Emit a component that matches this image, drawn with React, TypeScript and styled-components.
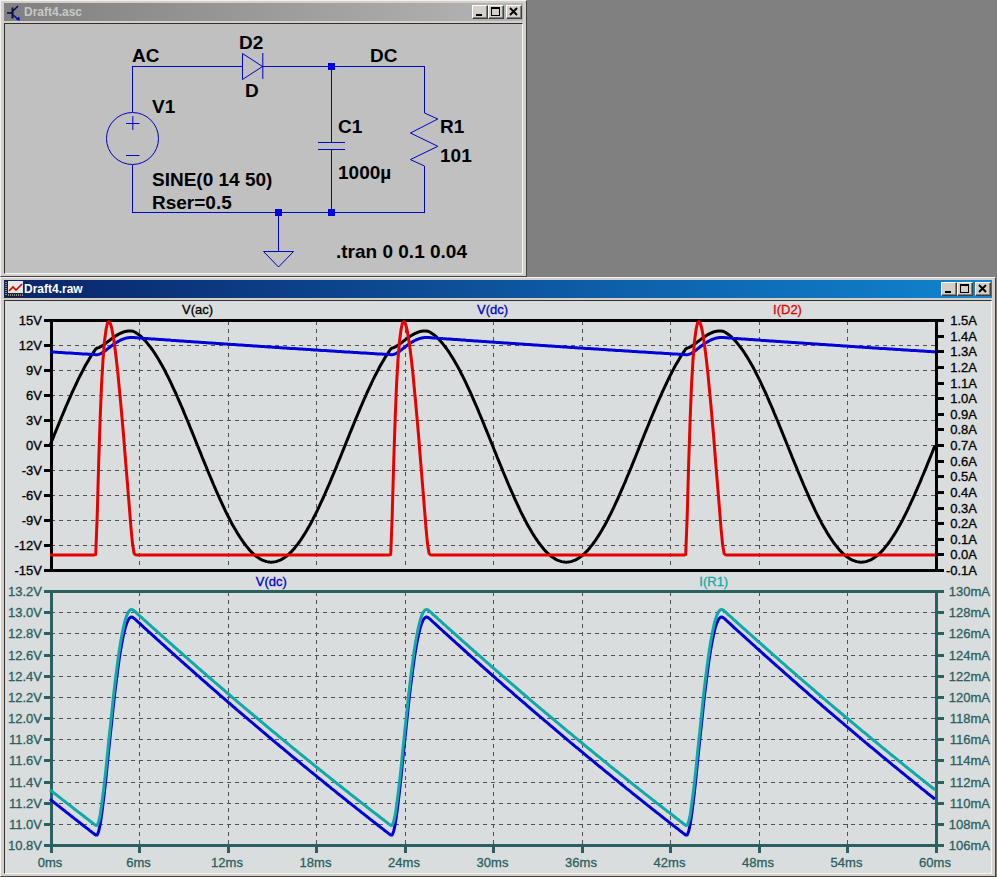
import React from 'react';
import styled, { createGlobalStyle } from 'styled-components';

const GlobalStyle = createGlobalStyle`
  html, body {
    margin: 0;
    padding: 0;
    background: #808080;
  }
  body {
    width: 997px;
    height: 877px;
    overflow: hidden;
    font-family: "Liberation Sans", Arial, sans-serif;
  }
`;

const Desktop = styled.div`
  width: 997px;
  height: 877px;
  display: flex;
  flex-direction: column;
  background: #808080;
`;

const Window = styled.div<{ $w: number; $h: number }>`
  box-sizing: border-box;
  flex: none;
  width: ${({ $w }) => $w}px;
  height: ${({ $h }) => $h}px;
  display: flex;
  flex-direction: column;
  background: #d4d0c8;
  padding: 2px 3px;
  border-top: 1px solid #f2f2f2;
  border-left: 1px solid #f2f2f2;
  border-right: 1px solid #404040;
  border-bottom: 1px solid #404040;
`;

const TitleBar = styled.div<{ $active?: boolean }>`
  flex: none;
  height: 18px;
  display: flex;
  align-items: center;
  gap: 1px;
  padding: 0 1px;
  background: ${({ $active }) =>
    $active
      ? 'linear-gradient(90deg, #0a246a, #1084d0)'
      : 'linear-gradient(90deg, #808080, #b5b5b5)'};
  color: ${({ $active }) => ($active ? '#ffffff' : '#c8c8c8')};
  font-size: 12px;
  font-weight: bold;
`;

const TitleText = styled.span`
  flex: 1;
`;

const Buttons = styled.div`
  display: flex;
  align-items: center;
`;

const CaptionButton = styled.div<{ $gap?: boolean }>`
  box-sizing: border-box;
  width: 16px;
  height: 14px;
  margin-left: ${({ $gap }) => ($gap ? 2 : 0)}px;
  display: flex;
  align-items: center;
  justify-content: center;
  background: #d4d0c8;
  border-top: 1px solid #ffffff;
  border-left: 1px solid #ffffff;
  border-right: 1px solid #404040;
  border-bottom: 1px solid #404040;
  box-shadow: inset -1px -1px 0 #808080;
`;

const Client = styled.div<{ $bg: string }>`
  flex: 1;
  min-height: 0;
  margin-top: 2px;
  background: ${({ $bg }) => $bg};
  border-top: 1px solid #303030;
  border-left: 1px solid #303030;
  border-right: 1px solid #f4f4f4;
  border-bottom: 1px solid #f4f4f4;
  overflow: hidden;
`;

const Pane = styled.section`
  display: flex;
  flex-direction: column;
`;

const TraceRow = styled.div<{ $count: number }>`
  height: 17px;
  width: 885px;
  margin-left: 45px;
  display: grid;
  grid-template-columns: repeat(${({ $count }) => $count}, 1fr);
`;

const Trace = styled.span<{ $color: string }>`
  text-align: center;
  color: ${({ $color }) => $color};
  font-size: 13px;
  line-height: 18px;
  -webkit-text-stroke: 0.3px ${({ $color }) => $color};
`;

const ChartSvg = styled.svg`
  display: block;
  flex: none;
  overflow: visible;
`;

const SchematicSvg = styled.svg`
  display: block;
`;

const TickLabel = styled.text`
  font-family: "Liberation Sans", Arial, sans-serif;
  font-size: 13px;
  stroke-width: 0.3px;
`;

const PartLabel = styled.text`
  font-family: "Liberation Sans", Arial, sans-serif;
  font-size: 19px;
  font-weight: bold;
  fill: #000000;
`;

const WIRE = '#0000c0';

// transient of the rectifier: source + Rser + diode into C || R, implicit euler
type Sample = { t: number; ac: number; dc: number; id: number };

function simulate(): Sample[] {
  const Is = 1e-14;
  const Vt = 0.02585;
  const Rser = 0.5;
  const C = 1000e-6;
  const R = 101;
  const dt = 2e-5;
  const diode = (v: number) => Is * (Math.exp(Math.min(v, 1.2) / Vt) - 1);
  let vc = 11.25;
  const out: Sample[] = [];
  const steps = Math.round(0.12 / dt);
  for (let n = 0; n <= steps; n++) {
    const t = n * dt;
    const vs = 14 * Math.sin(2 * Math.PI * 50 * t);
    // bisection on the diode current
    let lo = 0;
    let hi = 5;
    for (let k = 0; k < 50; k++) {
      const i = (lo + hi) / 2;
      const vcNext = (vc + (i * dt) / C) / (1 + dt / (R * C));
      const f = diode(vs - Rser * i - vcNext) - i;
      if (f > 0) lo = i;
      else hi = i;
    }
    const id = (lo + hi) / 2;
    vc = (vc + (id * dt) / C) / (1 + dt / (R * C));
    if (t >= 0.06 - dt / 2) {
      out.push({ t: (t - 0.06) * 1000, ac: vs - Rser * id, dc: vc, id });
    }
  }
  return out;
}

const samples = simulate();

const X0 = 46;
const X1 = 931;
const mapX = (ms: number) => X0 + (ms / 60) * (X1 - X0);
const msTicks = [0, 6, 12, 18, 24, 30, 36, 42, 48, 54, 60];

type Axis = { top: number; bottom: number; min: number; max: number; labels: string[] };

function linePoints(axis: Axis, pick: (s: Sample) => number) {
  const scale = (axis.bottom - axis.top) / (axis.max - axis.min);
  return samples
    .filter((_, i) => i % 5 === 0)
    .map((s) => `${(mapX(s.t) - 1).toFixed(1)},${(axis.bottom - (pick(s) - axis.min) * scale).toFixed(1)}`)
    .join(' ');
}

type Curve = { color: string; pick: (s: Sample) => number; axis: Axis };

type PlotProps = {
  height: number;
  color: string;
  labelEnd: number;
  left: Axis;
  right: Axis;
  curves: Curve[];
  xLabels?: boolean;
};

const Plot: React.FC<PlotProps> = ({ height, color, labelEnd, left, right, curves, xLabels }) => {
  const { top, bottom } = left;
  const rowY = (i: number, total: number) => top + (i * (bottom - top)) / (total - 1);
  return (
    <ChartSvg width={987} height={height}>
      {left.labels.map((_, i) =>
        i > 0 && i < left.labels.length - 1 ? (
          <line
            key={i}
            x1={X0}
            x2={X1}
            y1={rowY(i, left.labels.length)}
            y2={rowY(i, left.labels.length)}
            stroke="#505050"
            strokeDasharray="4 4"
            shapeRendering="crispEdges"
          />
        ) : null,
      )}
      {msTicks.slice(1, -1).map((ms) => (
        <line
          key={ms}
          x1={mapX(ms)}
          x2={mapX(ms)}
          y1={top}
          y2={bottom}
          stroke="#505050"
          strokeDasharray="4 4"
          shapeRendering="crispEdges"
        />
      ))}
      <rect
        x={X0}
        y={top}
        width={X1 - X0}
        height={bottom - top}
        fill="none"
        stroke={color}
        strokeWidth={3}
        shapeRendering="crispEdges"
      />
      {left.labels.map((label, i) => (
        <g key={label}>
          <line x1={X0 - 7} x2={X0} y1={rowY(i, left.labels.length)} y2={rowY(i, left.labels.length)} stroke={color} strokeWidth={3} shapeRendering="crispEdges" />
          <TickLabel x={X0 - 9} y={rowY(i, left.labels.length) + 4.5} textAnchor="end" fill={color} stroke={color}>
            {label}
          </TickLabel>
        </g>
      ))}
      {right.labels.map((label, i) => (
        <g key={label}>
          <line x1={X1} x2={X1 + 8} y1={rowY(i, right.labels.length)} y2={rowY(i, right.labels.length)} stroke={color} strokeWidth={3} shapeRendering="crispEdges" />
          <TickLabel x={labelEnd} y={rowY(i, right.labels.length) + 4.5} textAnchor="end" fill={color} stroke={color}>
            {label}
          </TickLabel>
        </g>
      ))}
      {curves.map((c) => (
        <polyline
          key={c.color}
          points={linePoints(c.axis, c.pick)}
          fill="none"
          stroke={c.color}
          strokeWidth={3}
          strokeLinejoin="round"
        />
      ))}
      {xLabels &&
        msTicks.map((ms) => (
          <g key={ms}>
            <line x1={mapX(ms)} x2={mapX(ms)} y1={bottom} y2={bottom + 7} stroke={color} strokeWidth={3} shapeRendering="crispEdges" />
            <TickLabel x={mapX(ms) - 1} y={bottom + 21} textAnchor="middle" fill={color} stroke={color}>
              {ms}ms
            </TickLabel>
          </g>
        ))}
    </ChartSvg>
  );
};

const Minimize = () => (
  <svg width="10" height="10" viewBox="0 0 10 10">
    <rect x="1" y="7" width="6" height="2" fill="#000" />
  </svg>
);

const Maximize = () => (
  <svg width="10" height="10" viewBox="0 0 10 10" fill="none" stroke="#000" shapeRendering="crispEdges">
    <path d="M0.5 0.5h8v8h-8z" />
    <path d="M0 1.5h9" />
  </svg>
);

const Close = () => (
  <svg width="10" height="10" viewBox="0 0 10 10" fill="none" stroke="#000" strokeWidth="1.9">
    <path d="M1 1l7 7M8 1l-7 7" />
  </svg>
);

const WindowButtons = () => (
  <Buttons>
    <CaptionButton>
      <Minimize />
    </CaptionButton>
    <CaptionButton>
      <Maximize />
    </CaptionButton>
    <CaptionButton $gap>
      <Close />
    </CaptionButton>
  </Buttons>
);

const TransistorIcon = () => (
  <svg width="18" height="17" viewBox="0 0 18 17" fill="none">
    <path d="M2 9h5" stroke="#000060" strokeWidth="1.5" />
    <path d="M7.500 3.500v11" stroke="#101030" strokeWidth="2" />
    <path d="M8 7l5-5" stroke="#000080" strokeWidth="1.4" />
    <path d="M8 11l6 5" stroke="#0000c0" strokeWidth="1.6" />
    <path d="M11 15.500l4 1-1-4z" fill="#0000c0" />
  </svg>
);

const PlotIcon = () => (
  <svg width="18" height="16" viewBox="0 0 18 16">
    <rect width="18" height="16" fill="#e8e8e8" />
    <rect width="3" height="16" fill="#202020" />
    <rect y="12" width="18" height="4" fill="#202020" />
    <path d="M1 1v14M3 14h15" stroke="#f0f0f0" strokeDasharray="1 1" fill="none" />
    <path d="M4 10l4-4 3 3 6-6" stroke="#e00000" strokeWidth="1.6" fill="none" />
  </svg>
);

const Schematic = () => (
  <SchematicSvg width="517" height="250" viewBox="5 24 517 250">
    <g fill="none" stroke={WIRE} shapeRendering="crispEdges">
      <path d="M132.500 112V66.500H242.500M263 66.500H424.500V113M424.500 165.500V212.500H132.500V164.500" />
      <path d="M331.500 66.500V142M331.500 149.500V212.500M278.500 212.500V251" />
      <path d="M318 142.500h27M318 149.500h27" />
    </g>
    <g fill="none" stroke={WIRE}>
      <circle cx="132.500" cy="138.500" r="26" />
      <path d="M126 123.500h13.500M132.800 116v14M126 155.500h13.500" />
      <path d="M242.500 53.500l20 13-20 13zM262.800 53v26" />
      <path d="M424.500 113l13.300 6-27.400 14 27.400 13.300-27.400 13.300 13.900 6.300" />
      <path d="M263.500 251.500h30l-15 15.500z" />
    </g>
    <g fill="#0000e0">
      <rect x="328" y="63" width="7" height="7" />
      <rect x="275" y="209" width="7" height="7" />
      <rect x="328" y="209" width="7" height="7" />
    </g>
    <PartLabel x="132" y="62">AC</PartLabel>
    <PartLabel x="239" y="49">D2</PartLabel>
    <PartLabel x="245" y="97">D</PartLabel>
    <PartLabel x="370" y="62">DC</PartLabel>
    <PartLabel x="152" y="113">V1</PartLabel>
    <PartLabel x="338" y="133">C1</PartLabel>
    <PartLabel x="440" y="133">R1</PartLabel>
    <PartLabel x="440" y="162">101</PartLabel>
    <PartLabel x="338" y="179">1000µ</PartLabel>
    <PartLabel x="152" y="186">SINE(0 14 50)</PartLabel>
    <PartLabel x="152" y="209">Rser=0.5</PartLabel>
    <PartLabel x="336" y="258">.tran 0 0.1 0.04</PartLabel>
  </SchematicSvg>
);

const voltage: Axis = {
  top: 2.5,
  bottom: 252.5,
  min: -15,
  max: 15,
  labels: ['15V', '12V', '9V', '6V', '3V', '0V', '-3V', '-6V', '-9V', '-12V', '-15V'],
};
const current: Axis = {
  top: 2.5,
  bottom: 252.5,
  min: -0.1,
  max: 1.5,
  labels: ['1.5A', '1.4A', '1.3A', '1.2A', '1.1A', '1.0A', '0.9A', '0.8A', '0.7A', '0.6A', '0.5A', '0.4A', '0.3A', '0.2A', '0.1A', '0.0A', '-0.1A'],
};
const dcVolts: Axis = {
  top: 1.5,
  bottom: 255.5,
  min: 10.8,
  max: 13.2,
  labels: ['13.2V', '13.0V', '12.8V', '12.6V', '12.4V', '12.2V', '12.0V', '11.8V', '11.6V', '11.4V', '11.2V', '11.0V', '10.8V'],
};
const loadCurrent: Axis = {
  top: 1.5,
  bottom: 255.5,
  min: 0.106,
  max: 0.13,
  labels: ['130mA', '128mA', '126mA', '124mA', '122mA', '120mA', '118mA', '116mA', '114mA', '112mA', '110mA', '108mA', '106mA'],
};

const App: React.FC = () => (
  <Desktop>
    <GlobalStyle />
    <Window $w={527} $h={277}>
      <TitleBar>
        <TransistorIcon />
        <TitleText>Draft4.asc</TitleText>
        <WindowButtons />
      </TitleBar>
      <Client $bg="#c0c0c0">
        <Schematic />
      </Client>
    </Window>
    <Window $w={996} $h={600}>
      <TitleBar $active>
        <PlotIcon />
        <TitleText>Draft4.raw</TitleText>
        <WindowButtons />
      </TitleBar>
      <Client $bg="#d9dddd">
        <Pane>
          <TraceRow $count={3}>
            <Trace $color="#000000">V(ac)</Trace>
            <Trace $color="#0000c8">V(dc)</Trace>
            <Trace $color="#e00000">I(D2)</Trace>
          </TraceRow>
          <Plot
            height={255}
            color="#000000"
            labelEnd={972}
            left={voltage}
            right={current}
            curves={[
              { color: '#000000', pick: (s) => s.ac, axis: voltage },
              { color: '#0000d8', pick: (s) => s.dc, axis: voltage },
              { color: '#e80000', pick: (s) => s.id, axis: current },
            ]}
          />
        </Pane>
        <Pane>
          <TraceRow $count={2}>
            <Trace $color="#0000c8">V(dc)</Trace>
            <Trace $color="#10a8a8">I(R1)</Trace>
          </TraceRow>
          <Plot
            height={283}
            color="#2a6060"
            labelEnd={985}
            left={dcVolts}
            right={loadCurrent}
            xLabels
            curves={[
              { color: '#0000d8', pick: (s) => s.dc, axis: dcVolts },
              { color: '#10a8a8', pick: (s) => s.dc / 101, axis: loadCurrent },
            ]}
          />
        </Pane>
      </Client>
    </Window>
  </Desktop>
);

export default App;
